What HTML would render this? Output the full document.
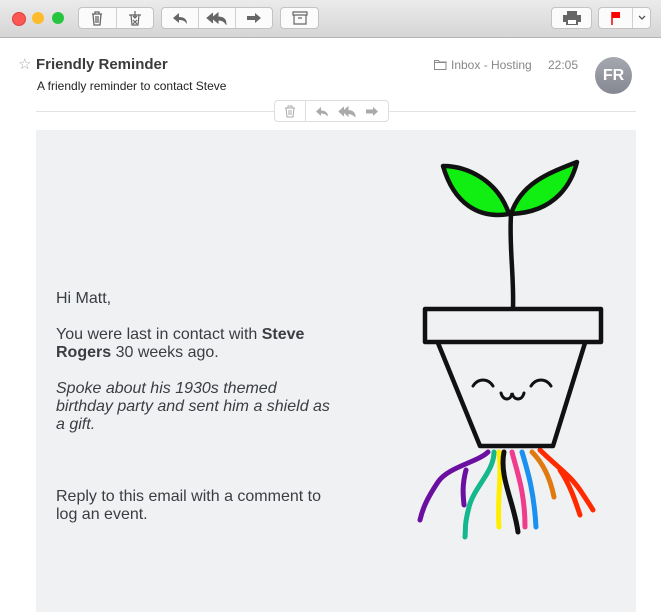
<!DOCTYPE html>
<html><head><style>
body{margin:0;width:661px;height:612px;overflow:hidden;background:#fff;font-family:"Liberation Sans",sans-serif;position:relative}
.tb{position:absolute;left:0;top:0;width:661px;height:37px;background:linear-gradient(#ecebec,#d6d5d6);border-bottom:1px solid #b5b4b5}
.dot{position:absolute;top:12px;width:12px;height:12px;border-radius:50%}
.btn{position:absolute;top:7px;height:22px;background:#fbfbfb;border:1px solid #c4c3c4;border-radius:4px;box-sizing:border-box;display:flex}
.btn div{flex:1;border-right:1px solid #d0d0d0;display:flex;align-items:center;justify-content:center}
.btn div:last-child{border-right:none}
.t{position:absolute;white-space:nowrap}
.body{position:absolute;left:36px;top:130px;width:600px;height:482px;background:#f0f1f3}
.txt{position:absolute;left:56px;font-size:16px;color:#3a3d42;line-height:18px;width:290px}
</style></head><body>
<div class="tb">
<div class="dot" style="left:12px;background:#fd5754;border:0.5px solid #de3f3c"></div>
<div class="dot" style="left:32px;background:#febb2e"></div>
<div class="dot" style="left:52px;background:#25c63e"></div>
<div class="btn" style="left:78px;width:76px"><div><svg width="14" height="16"><path d="M2 4h10M5 4V2h4v2M3 4l1 11h6l1-11M6 6v7M8 6v7" stroke="#666" fill="none" stroke-width="1.3"/></svg></div><div><svg width="14" height="16"><path d="M1 5h12M3 5l1 10h6l1-10M7 1v7M5 6l2 2 2-2M5 10l4 4M9 10l-4 4" stroke="#666" fill="none" stroke-width="1.2"/></svg></div></div>
<div class="btn" style="left:161px;width:112px"><div><svg width="18" height="14"><path d="M8 2L2 7l6 5V9c4 0 6 1 8 4 0-5-3-7-8-7z" fill="#666"/></svg></div><div><svg width="22" height="14"><path d="M7 2L1 7l6 5M12 2L6 7l6 5V9c4 0 6 1 8 4 0-5-3-7-8-7z" fill="#666" stroke="#666"/></svg></div><div><svg width="18" height="14"><path d="M10 2l6 5-6 5V9H2V5h8z" fill="#666"/></svg></div></div>
<div class="btn" style="left:280px;width:39px"><div><svg width="16" height="14"><path d="M1 1h14v3H1zM2 4v9h12V4M6 7h4" stroke="#666" fill="none" stroke-width="1.2"/></svg></div></div>
<div class="btn" style="left:551px;width:41px"><div><svg width="20" height="16"><path d="M5 1h10v4H5zM1 5h18v7h-3v3H4v-3H1z" fill="#666"/><rect x="6" y="10" width="8" height="4" fill="#fff"/></svg></div></div>
<div class="btn" style="left:598px;width:53px"><div style="flex:2"><svg width="12" height="14"><path d="M2 1v13" stroke="#e00" stroke-width="1.5"/><path d="M2 1h8v6H2z" fill="#f00"/></svg></div><div style="flex:1"><svg width="8" height="6"><path d="M1 1l3 3 3-3" stroke="#555" fill="none" stroke-width="1.3"/></svg></div></div>
</div>
<div class="t" style="left:18px;top:55px;font-size:15px;color:#aaa">☆</div>
<div class="t" style="left:36px;top:56px;font-size:15px;font-weight:bold;color:#3b3b3b">Friendly Reminder</div>
<div class="t" style="left:37px;top:79px;font-size:12px;color:#222">A friendly reminder to contact Steve</div>
<svg class="t" style="left:434px;top:59px" width="13" height="11"><path d="M0.5 1.5h4l1 1.5h6.5v7.5H0.5z M0.5 3.5h11.5" stroke="#888" fill="none"/></svg>
<div class="t" style="left:451px;top:58px;font-size:12px;color:#888">Inbox - Hosting</div>
<div class="t" style="left:548px;top:58px;font-size:12px;color:#888">22:05</div>
<div class="t" style="left:595px;top:57px;width:37px;height:37px;border-radius:50%;background:linear-gradient(#a5a8b0,#858892);color:#fff;font-weight:bold;font-size:16px;text-align:center;line-height:37px">FR</div>
<div class="t" style="left:36px;top:111px;width:600px;height:1px;background:#e2e2e6"></div>
<div class="t" style="left:274px;top:100px;width:113px;height:20px;border:1px solid #dcdde2;border-radius:4px;background:#fff;display:flex">
<div style="width:30px;border-right:1px solid #ddd;display:flex;align-items:center;justify-content:center"><svg width="12" height="13"><path d="M1 3h10M4 3V1h4v2M2 3l1 9h6l1-9M5 5v5M7 5v5" stroke="#aaa" fill="none"/></svg></div>
<div style="flex:1;display:flex;align-items:center;justify-content:space-around;padding:0 4px"><svg width="14" height="11"><path d="M6 1L1 5.5 6 10V7.5c3 0 5 1 7 3 0-4-3-6-7-6z" fill="#aaa"/></svg><svg width="18" height="11"><path d="M6 1L1 5.5 6 10M10 1L5 5.5 10 10V7.5c3 0 5 1 7 3 0-4-3-6-7-6z" fill="#aaa" stroke="#aaa"/></svg><svg width="14" height="11"><path d="M8 1l5 4.5-5 4.5V7.5H1v-4h7z" fill="#aaa"/></svg></div>
</div>
<div class="body"></div>
<div class="txt" style="top:290px">Hi Matt,</div>
<div class="txt" style="top:326px">You were last in contact with <b>Steve Rogers</b> 30 weeks ago.</div>
<div class="txt" style="top:380px;font-style:italic;width:278px">Spoke about his 1930s themed birthday party and sent him a shield as a gift.</div>
<div class="txt" style="top:488px">Reply to this email with a comment to log an event.</div>
<svg class="t" style="left:0;top:0" width="661" height="612">
<g fill="none" stroke-linecap="round" stroke-width="5">
<path d="M488 452c-10 10-40 15-50 30s-15 25-18 38M466 470c-4 15-3 25-2 35" stroke="#6a0fa0"/>
<path d="M494 452c0 20-20 35-25 55s-3 20-4 30" stroke="#14b88c"/>
<path d="M499 452c3 25-2 45 0 75" stroke="#ffee00"/>
<path d="M504 452c-5 25 10 50 14 80" stroke="#111"/>
<path d="M512 452c5 20 13 40 13 75" stroke="#f03c8c"/>
<path d="M522 452c6 20 12 40 14 75" stroke="#1a90f0"/>
<path d="M532 452c10 10 18 25 22 45" stroke="#e07a10"/>
<path d="M540 450c15 15 30 25 40 40s10 15 13 20M560 470c10 15 15 30 20 45" stroke="#ff2a00"/>
</g>
<g stroke="#111" stroke-width="4.5" fill="none" stroke-linejoin="round">
<path d="M511 215c-2 30 3 60 2 93"/>
<path d="M443 166c25 0 55 15 66 48-30 5-55-10-66-48z" fill="#11ee11"/>
<path d="M577 162c-5 20-20 50-66 52 10-30 35-40 66-52z" fill="#11ee11"/>
<rect x="425" y="309" width="176" height="33" fill="#f0f1f3"/>
<path d="M438 343L480 446h73l32-103"/>
</g>
<g stroke="#111" stroke-width="3" fill="none" stroke-linecap="round">
<path d="M473 386c5-8 15-8 20 0M531 386c5-8 15-8 20 0M501 393c2 8 10 8 11 0 2 8 10 8 12 0"/>
</g>
</svg>
</body></html>
